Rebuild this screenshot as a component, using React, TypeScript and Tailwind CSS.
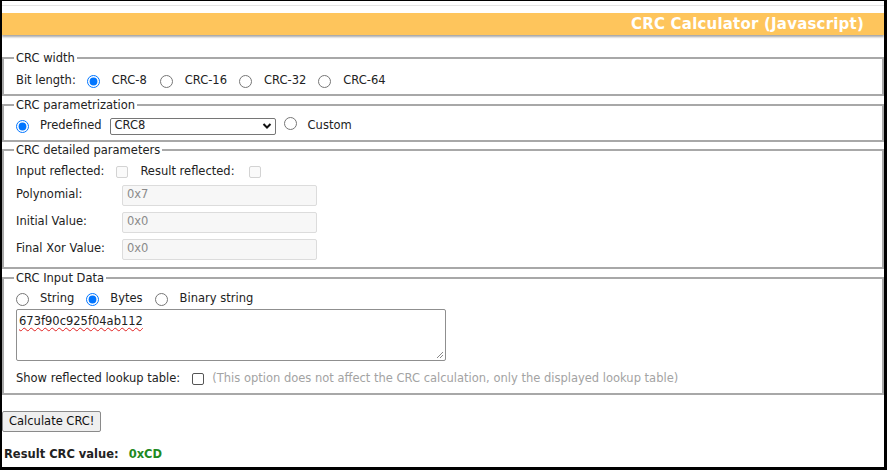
import React from "react";

const font = "font-['DejaVu_Sans','Verdana',sans-serif]";

function Radio({ checked }: { checked?: boolean }) {
  return (
    <input
      type="radio"
      readOnly
      checked={!!checked}
      className="m-0 w-[13px] h-[13px] accent-[#0075ff]"
    />
  );
}

function FS({ legend, children, className = "" }: { legend: string; children: React.ReactNode; className?: string }) {
  return (
    <fieldset className={`border-2 border-[#a8a8a8] px-[12px] ${className}`}>
      <legend className="px-[2px] -ml-[2px] text-[#222] leading-[14px]">{legend}</legend>
      {children}
    </fieldset>
  );
}

export default function App() {
  return (
    <div className={`w-[887px] h-[470px] overflow-hidden bg-white border-t border-l-2 border-r-[3px] border-b-[3px] border-black text-[11.5px] text-[#222] ${font}`}>
      <div className="mt-[4px] h-px bg-[#e4e4e4]" />
      <div className="mt-[7px] h-[22px] bg-[#fec55c] shadow-[0_2px_2px_rgba(0,0,0,0.35)] flex items-center justify-end pr-[20px]">
        <span className="text-white font-bold text-[15px] tracking-[0.2px]">CRC Calculator (Javascript)</span>
      </div>

      <div className="mt-[16px]">
        <FS legend="CRC width" className="pb-[5px]">
          <div className="flex items-center h-[16px] mt-[8px]">
            <span className="mr-[11px]">Bit length:</span>
            <Radio checked />
            <span className="ml-[12px] mr-[13px]">CRC-8</span>
            <Radio />
            <span className="ml-[12px] mr-[12px]">CRC-16</span>
            <Radio />
            <span className="ml-[12px] mr-[12px]">CRC-32</span>
            <Radio />
            <span className="ml-[12px]">CRC-64</span>
          </div>
        </FS>

        <FS legend="CRC parametrization" className="pb-[5px] mt-[2px]">
          <div className="flex items-center h-[18px] mt-[5px]">
            <Radio checked />
            <span className="ml-[11px] mr-[8px]">Predefined</span>
            <div className="w-[166px] h-[17px] border border-[#767676] rounded-[2px] flex items-center justify-between pl-[4px] pr-[3px] bg-white">
              <span>CRC8</span>
              <svg width="10" height="8" viewBox="0 0 10 8">
                <path d="M1.5 2 L5 5.5 L8.5 2" fill="none" stroke="#111" strokeWidth="2" />
              </svg>
            </div>
            <span className="ml-[8px]"><Radio /></span>
            <span className="ml-[11px]">Custom</span>
          </div>
        </FS>

        <FS legend="CRC detailed parameters" className="pb-[7px] mt-[1px]">
          <div className="flex items-center h-[16px] mt-[7px]">
            <span>Input reflected:</span>
            <span className="ml-[12px] w-[12px] h-[12px] border border-[#d3d3d3] rounded-[2px] bg-[#fafafa]" />
            <span className="ml-[12px]">Result reflected:</span>
            <span className="ml-[14px] w-[12px] h-[12px] border border-[#d3d3d3] rounded-[2px] bg-[#fafafa]" />
          </div>
          {[
            ["Polynomial:", "0x7"],
            ["Initial Value:", "0x0"],
            ["Final Xor Value:", "0x0"],
          ].map(([l, v], i) => (
            <div key={l} className={`flex items-center h-[22px] ${i === 0 ? "mt-[4px]" : "mt-[5px]"}`}>
              <span className="w-[106px]">{l}</span>
              <div className="w-[195px] h-[21px] border border-[#dcdcdc] rounded-[2px] bg-[#f7f7f7] text-[#8a8a8a] flex items-center pl-[4px]">
                {v}
              </div>
            </div>
          ))}
        </FS>

        <FS legend="CRC Input Data" className="pb-[6px] mt-[2px]">
          <div className="flex items-center h-[16px] mt-[6px]">
            <Radio />
            <span className="ml-[11px] mr-[12px]">String</span>
            <Radio checked />
            <span className="ml-[11px] mr-[12px]">Bytes</span>
            <Radio />
            <span className="ml-[12px]">Binary string</span>
          </div>
          <div className="mt-[2px] w-[430px] h-[52px] border border-[#8f8f8f] rounded-[2px] relative pl-[2px] pt-[3px]">
            <span className="underline decoration-wavy decoration-[#e02020] decoration-[1px] underline-offset-[2px]">673f90c925f04ab112</span>
            <svg className="absolute right-[1px] bottom-[1px]" width="8" height="8" viewBox="0 0 8 8">
              <path d="M7 1 L1 7 M7 4 L4 7" stroke="#888" strokeWidth="1" />
            </svg>
          </div>
          <div className="flex items-center h-[16px] mt-[10px]">
            <span>Show reflected lookup table:</span>
            <span className="ml-[12px] w-[12px] h-[12px] border border-[#555] rounded-[2px] bg-white" />
            <span className="ml-[8px] text-[#a3a3a3]">(This option does not affect the CRC calculation, only the displayed lookup table)</span>
          </div>
        </FS>
      </div>

      <div className="mt-[16px]">
        <button className="h-[21px] px-[6px] border border-[#8a8a8a] rounded-[2px] bg-[#efefef] text-[11.5px] text-[#111] leading-none">
          Calculate CRC!
        </button>
      </div>
      <div className="mt-[14px] ml-[2px] font-bold flex">
        <span>Result CRC value:</span>
        <span className="ml-[10px] text-[#1f8a1f]">0xCD</span>
      </div>
    </div>
  );
}
